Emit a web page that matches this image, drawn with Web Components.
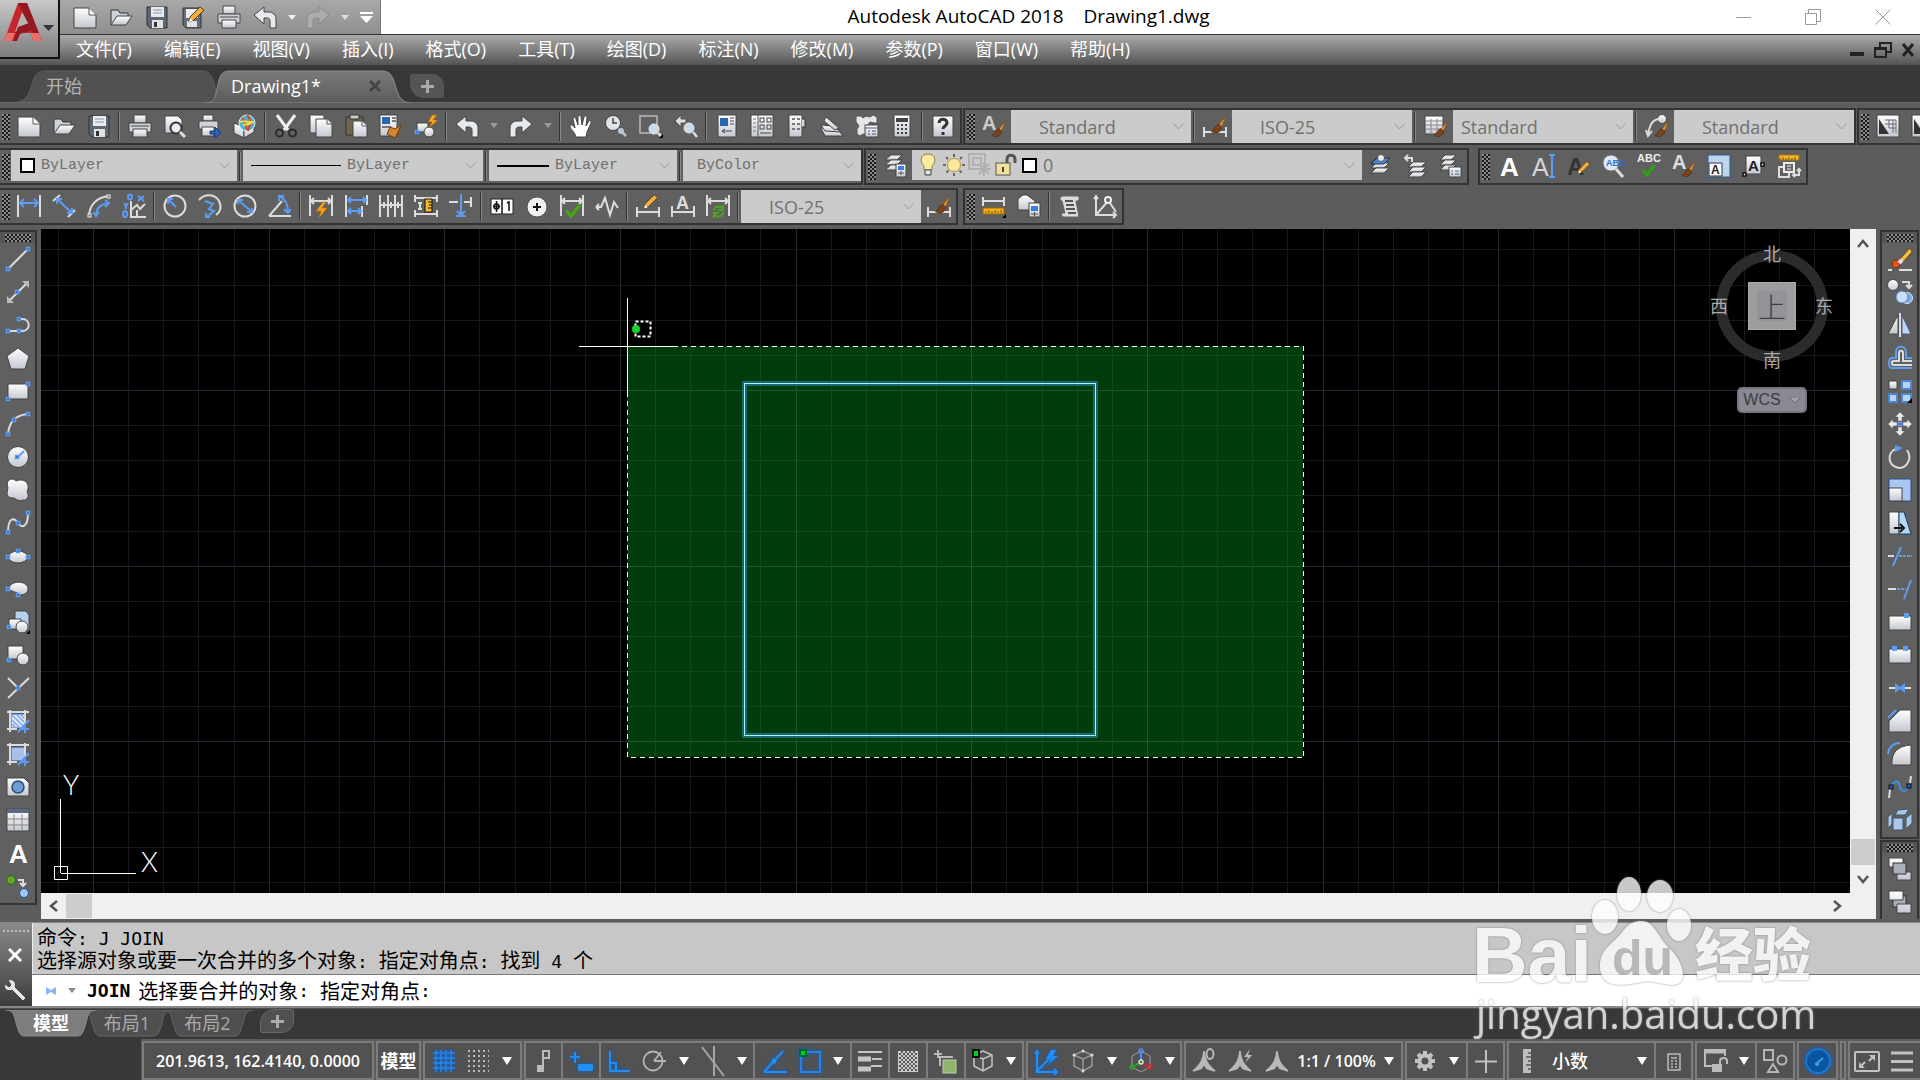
<!DOCTYPE html>
<html lang="zh-CN">
<head>
<meta charset="utf-8">
<title>Autodesk AutoCAD 2018 Drawing1.dwg</title>
<style>
html,body{height:100%}
body{margin:0;display:flex;flex-direction:column;overflow:hidden;background:#5c5c5c;font:18px/24px "Open Sans","Noto Sans CJK SC",sans-serif;color:#fff;position:relative}
.bars{display:flex;flex-direction:column;gap:3px;padding:5px 0 4px;background:#5c5c5c;border-top:1px solid #696969;box-sizing:border-box;height:127px;flex:none}
.row{display:flex;height:37px}
.row .gap{width:8px;flex:none}
.row .gap.s{width:4px}
.work{flex:1;min-height:0;display:flex}
.side{width:41px;flex:none;overflow:hidden}
.side.r{width:40px;margin-left:4px}
</style>
</head>
<body>
<cad-header></cad-header>
<cad-file-tabs></cad-file-tabs>
<section class="bars">
  <div class="row">
    <cad-toolbar><cad-tools list="new open save | print preview plot publish | cut copy paste match bedit | undo v redo v | pan zoomrt zoomwin zoomprev | props dcenter tpal sheet markup calc | help"></cad-tools></cad-toolbar>
    <cad-toolbar><cad-tools list="tstyle"></cad-tools><cad-combo label="文字样式" value="Standard" pad="28"></cad-combo><cad-tools list="| dstyle"></cad-tools><cad-combo label="标注样式" value="ISO-25" pad="28"></cad-combo><cad-tools list="| tbstyle"></cad-tools><cad-combo label="表格样式" value="Standard" pad="8"></cad-combo><cad-tools list="| mlstyle"></cad-tools><cad-combo label="多重引线样式" value="Standard" pad="28"></cad-combo></cad-toolbar>
    <cad-toolbar><cad-tools list="vp1 vp1"></cad-tools></cad-toolbar>
  </div>
  <div class="row">
    <cad-toolbar>
      <cad-combo class="mono" label="颜色" value="ByLayer" pad="4" w="226"><cad-swatch></cad-swatch></cad-combo><cad-tools list="|"></cad-tools>
      <cad-combo class="mono" label="线型" value="ByLayer" pad="6" w="240"><cad-line w="90" t="1"></cad-line></cad-combo><cad-tools list="|"></cad-tools>
      <cad-combo class="mono" label="线宽" value="ByLayer" pad="6" w="188"><cad-line w="52" t="2"></cad-line></cad-combo><cad-tools list="|"></cad-tools>
      <cad-combo class="mono" label="打印样式" value="ByColor" pad="14" w="178"></cad-combo>
    </cad-toolbar>
    <cad-toolbar><cad-tools list="layers"></cad-tools><cad-combo class="layer" label="图层" value="0" pad="4" w="450"><cad-icon name="bulb"></cad-icon><cad-icon name="sun"></cad-icon><cad-icon name="vpfreeze"></cad-icon><cad-icon name="lock"></cad-icon><cad-swatch></cad-swatch></cad-combo><cad-tools list="laycur layprev laystate"></cad-tools></cad-toolbar>
    <span class="gap"></span>
    <cad-toolbar><cad-tools list="mtext stext tedit tfind spell tstyle2 tscale tjust tspace"></cad-tools></cad-toolbar>
  </div>
  <div class="row">
    <cad-toolbar><cad-tools list="dlin dali darc dord | drad djog ddia dang | dquick dbase dcont dspace dbreak | tol cmark dinsp djogl | dedit dtedit dupd |"></cad-tools><cad-combo label="标注样式控制" value="ISO-25" pad="28"></cad-combo><cad-tools list="dstyle"></cad-tools></cad-toolbar>
    <span class="gap s"></span>
    <cad-toolbar><cad-tools list="dist massprop | list idpt"></cad-tools></cad-toolbar>
  </div>
</section>
<main class="work">
  <div class="side"><cad-toolbar vertical><cad-tools list="line xline pline polygon rect arc circle cloud spline ellipse earc insert block point hatch gradient region table mtext addsel"></cad-tools></cad-toolbar></div>
  <cad-canvas></cad-canvas>
  <div class="side r"><cad-toolbar vertical class="right"><cad-tools list="erase mcopy mirror offset array move rotate scale stretch trim extend brkpt brk join chamfer fillet blend explode"></cad-tools></cad-toolbar><cad-toolbar vertical class="right"><cad-tools list="front back"></cad-tools></cad-toolbar></div>
</main>
<cad-command></cad-command>
<cad-layout-tabs></cad-layout-tabs>
<cad-status></cad-status>
<cad-watermark></cad-watermark>

<script>
/* ---------- icon drawings, on a 24 x 24 grid ---------- */
const n=(x,y)=>`<rect class="n" x="${x-1.5}" y="${y-1.5}" width="3" height="3"/>`;
const A=(x,y,s,c='#ddd',w=700)=>`<text x="${x}" y="${y}" font-size="${s}" fill="${c}" font-weight="${w}">A</text>`;
const brush=`<path d="M23 2L14 13l3 3z" fill="#f09a28" stroke="#7a4a10" stroke-width=".7"/><path d="M15 12c-5 0-5 6-9 8 4 3 11 2 12-5z" fill="#7a431c" stroke="#4a2810" stroke-width=".7"/>`;
const sbrush=`<g transform="translate(5 5) scale(.82)">${brush}</g>`;
const pencil=`<path d="M8 17l1-5L19 2l4 3-10 10z" fill="#f3b03c" stroke="#5a3b12"/><path d="M8 17l1-4 3 3z" fill="#fff"/>`;
const layer3=`<path class="f" d="M8 4h13l-5 5H3z"/><path class="f" d="M8 9h13l-5 5H3z"/><path class="f" d="M8 14h13l-5 5H3z"/>`;
const dimH=(y=8)=>`<path class="s" d="M1 1v21M23 1v21M2 ${y}h20M5 ${y-3}l-3 3 3 3M19 ${y-3}l3 3-3 3" stroke-width="1.500"/>`;
const compass=(x)=>`<path d="M12 2c-1 9-3 13-11 20l8-2.500 3-4 3 4 8 2.500C15 15 13 11 12 2z" fill="#b8b8b8" stroke="#b8b8b8" stroke-width="1.500"/>${x}`;
const cube=(c='#b0b0b0')=>`<path d="M12 2l9 4v11l-9 5-9-5V6zM3 6l9 4 9-4M12 10v12" fill="none" stroke="${c}" stroke-width="1.5"/>`;
const page=`<path class="f" d="M1 3h15l7 7v13H1z"/><path d="M16 3v7h7" fill="#fff" stroke="#555"/>`;
const I={
new:page,
open:`<path d="M2 20V5h7l2 3h8v4" fill="#cdd2da" stroke="#333"/><path class="f" d="M2 20l6-9h15l-6 9z"/>`,
save:`<path d="M2 2h20v21H5l-3-3z" fill="#5d6673" stroke="#333"/><rect x="6" y="2" width="13" height="10" fill="#e9ebef"/><path d="M8 5h9M8 8h9" stroke="#8a96a8"/><rect x="7" y="15" width="11" height="8" fill="#dfe3e8"/><rect x="9" y="17" width="3" height="5" fill="#333"/>`,
saveas:`<path d="M2 3h18v20H5l-3-3z" fill="#666e7a" stroke="#333"/><rect x="5" y="4" width="12" height="9" fill="#e9ebef"/><rect x="6" y="16" width="10" height="6" fill="#dfe3e8"/>${pencil}`,
print:`<path class="f" d="M6 1h12v8H6z"/><path d="M1 9h22v9H1z" fill="#cfd3d9" stroke="#444"/><path class="f" d="M5 15h14v8H5z"/><path d="M3 12h18" stroke="#444"/>`,
preview:`<path class="f" d="M2 2h13l4 4v13H2z"/><circle cx="13" cy="14" r="5.5" fill="#e6eefa" stroke="#333" stroke-width="2"/><path d="M17 18l5 5" stroke="#ddd" stroke-width="3"/>`,
plot:`<path class="f" d="M5 1h10v6H5z"/><path d="M1 7h19v8H1z" fill="#cfd3d9" stroke="#444"/><path class="f" d="M4 13h12v9H4z"/><path d="M12 17h5v-4l6 6-6 5v-4h-5z" fill="#2b63b8" stroke="#183c78"/>`,
publish:`<path class="f" d="M1 9l10 4v11L1 19z"/><path class="f" d="M11 13l10-4v9l-10 6z"/><circle cx="14" cy="9" r="8" fill="#3fb6d8" stroke="#e8e8e8"/><path d="M9 4c4 3 2 7 6 12M14 1c5 5 3 10 1 16" stroke="#e8402e" fill="none" stroke-width="2"/><path d="M7 8c5-2 9 1 14 0M10 12c3-4 7 1 9-5" stroke="#f2e037" fill="none" stroke-width="2"/>`,
cut:`<path d="M3 1l11 15M21 1L10 16" stroke="#eee" stroke-width="3"/><circle cx="5.500" cy="19" r="3.500" fill="none" stroke="#2c2c2c" stroke-width="2"/><circle cx="18.500" cy="19" r="3.500" fill="none" stroke="#2c2c2c" stroke-width="2"/>`,
copy:`<path class="f" d="M1 1h14v18H1z"/><path class="f" d="M7 5h11l5 5v13H7z"/><path d="M18 5v5h5" fill="#fff" stroke="#555"/>`,
paste:`<path d="M2 3h17v18H2z" fill="#75644c" stroke="#333"/><path d="M6 1h9v4H6z" fill="#ccc" stroke="#333"/><path class="f" d="M9 7h9l5 5v11H9z"/><path d="M18 7v5h5" fill="#fff" stroke="#555"/>`,
match:`<rect class="f" x="1" y="1" width="17" height="21"/><rect x="3" y="3" width="8" height="7" fill="#2b66b5"/><path d="M13 4h4M13 7h4M3 13h9" stroke="#555" stroke-width="1.500"/><path d="M22 11l-6 4-5-2-3 7 8 4 3-6z" fill="#d9842c" stroke="#6e3b0e"/>`,
bedit:`<rect class="f" x="3" y="9" width="11" height="9"/><circle class="f" cx="15" cy="18" r="5"/>${n(3,18)}<path d="M18 1l-4 7h4l-3 6 9-8h-5l4-5z" fill="#f5a623" stroke="#a35d00" stroke-width=".6"/>`,
undo:`<path d="M1 10l10-8v5h5c4 0 7 3 7 7v9h-6v-7c0-2-1-3-3-3h-3v6z" fill="#e6e9ee" stroke="#444"/>`,
redo:`<path d="M23 10l-10-8v5H8c-4 0-7 3-7 7v9h6v-7c0-2 1-3 3-3h3v6z" fill="#e6e9ee" stroke="#444"/>`,
redod:`<path d="M23 10l-10-8v5H8c-4 0-7 3-7 7v9h6v-7c0-2 1-3 3-3h3v6z" fill="#adadad" stroke="#888"/>`,
pan:`<path d="M7 23C6 18 1 15 1 12c1-2 3-1 5 2L4 5c0-2 3-2 3 0l2 6V3c0-2 3-2 3 0l1 8 2-8c1-2 3-1 3 1l-1 8 3-5c1-1 3 0 2 2l-4 9-1 5z" fill="#fff" stroke="#444"/>`,
zoomrt:`<path d="M15 15l7 7" stroke="#bbb" stroke-width="3"/><circle cx="9" cy="9" r="7.500" fill="#dfe4ea" stroke="#444"/><path d="M9 4v5h4" stroke="#444" fill="none" stroke-width="1.500"/><circle cx="17" cy="17" r="3" fill="#b9c6d8"/>`,
zoomwin:`<rect x="1" y="2" width="17" height="17" fill="none" stroke="#bbb" stroke-width="1.500"/><circle cx="15" cy="15" r="5" fill="#c9dbe8" stroke="#e8e8e8"/><path d="M19 19l3 3" stroke="#ddd" stroke-width="2.500"/><path class="k" d="M24 20v4h-4z"/>`,
zoomprev:`<path d="M1 7l6-6v4h5v4H7v4z" fill="#ddd" stroke="#555"/><circle cx="15" cy="14" r="5" fill="#c9dbe8" stroke="#e8e8e8"/><path d="M19 18l4 5" stroke="#ddd" stroke-width="2.500"/>`,
props:`<rect class="f" x="3" y="1" width="18" height="22"/><rect x="5" y="4" width="8" height="8" fill="#2b66b5"/><path d="M15 4h4M15 7h4M15 10h4M7 17h10M7 17l3-2M7 17l3 2" stroke="#444"/>`,
dcenter:`<rect class="f" x="1" y="1" width="22" height="22"/><path d="M8 1v22" stroke="#555"/><path d="M3 5h3M3 9h3M3 13h3M3 17h3" stroke="#777"/><g fill="none" stroke="#444"><rect x="10" y="4" width="4" height="4"/><rect x="17" y="4" width="4" height="4"/><rect x="10" y="11" width="4" height="4"/><rect x="17" y="11" width="4" height="4"/></g><path d="M10 19h11" stroke="#444"/>`,
tpal:`<rect class="f" x="4" y="1" width="13" height="22"/><path d="M17 5h3v8h-3" fill="#ddd" stroke="#333"/><path d="M7 5h3M12 5h3M7 10h3M12 10h3M7 15h3M12 15h3" stroke="#777" stroke-width="2"/>`,
sheet:`<path class="f" d="M1 14h16l6 8H5z"/><path class="f" d="M1 11l12 1 8 6-16-1z"/><path class="f" d="M6 3l13 11-4 2L4 7z"/>`,
markup:`<path d="M1 2h5l2 2 3-2 4 1 3-2 4 2v6h-3l-4-1-3 4v9l-4-1-3 2-3-2V15l2-3-3-4z" fill="#e3e6eb" stroke="#555"/><rect class="f" x="10" y="11" width="13" height="12"/><path d="M10 14h13M13 17h2M17 17h4M13 20h2M17 20h4" stroke="#557"/>`,
calc:`<rect class="f" x="4" y="1" width="16" height="22"/><rect x="6" y="4" width="12" height="4" fill="#444"/><path d="M7 11h2M11 11h2M15 11h2M7 15h2M11 15h2M15 15h2M7 19h2M11 19h2M15 19h2" stroke="#444" stroke-width="2"/>`,
help:`<rect class="f" x="2" y="2" width="20" height="21"/><path d="M8 9c0-5 8-5 8 0 0 3-4 3-4 6M12 18v3" fill="none" stroke="#333" stroke-width="3"/>`,
tstyle:`${A(0,16,20,'#ccc')}${sbrush}`,
dstyle:`<path class="s" d="M1 13v10M23 13v10M2 18h20"/><g transform="translate(3 0) scale(.88)">${brush}</g>`,
tbstyle:`<rect class="f" x="1" y="2" width="18" height="18"/><path d="M1 7h18M1 11h18M1 15h18M7 5v15M13 5v15" stroke="#888"/>${sbrush}`,
mlstyle:`<circle class="f" cx="17" cy="5" r="4.500"/><path class="s" d="M14 5c-8 1-9 7-11 15M1 16l2 6 4-5"/>${sbrush}`,
vp1:`<rect class="f" x="1" y="1" width="22" height="22"/><path d="M3 5v15h10z" fill="#333"/><path d="M9 6h11v13M9 10h11M13 14h7M13 6v8M17 6v13" stroke="#667" fill="none"/>`,
layers:`<path class="f" d="M8 1h11l-5 5H2z"/><path class="f" d="M8 6h11l-5 5H2z"/><path class="f" d="M8 11h11l-5 5H2z"/><rect class="f" x="13" y="10" width="10" height="13"/><rect x="15" y="12" width="6" height="4" fill="#3b7de0"/><path d="M15 19h6M18 17v4" stroke="#555"/>`,
bulb:`<path d="M12 1c-9 0-8 9-4 12v4h8v-4c4-3 5-12-4-12z" fill="#fbe9a0" stroke="#8b7a4a"/><path class="f" d="M9 17h6v5H9z"/>`,
sun:`<path d="M12 1v22M1 12h22M4 4l16 16M20 4L4 20" stroke="#666" stroke-width="2" stroke-dasharray="3 16 3"/><circle cx="12" cy="12" r="6.500" fill="#fde79c" stroke="#b89a4a"/>`,
vpfreeze:`<g fill="none" stroke="#a8a8a8" stroke-width="1.500"><rect x="1" y="1" width="16" height="15"/><rect x="5" y="5" width="8" height="7"/><path d="M16 9v14M9 16h14M11 11l10 10M21 11L11 21" stroke="#b0b0b0" stroke-width="2"/></g>`,
lock:`<path d="M13 11V6c0-5 8-5 8 0v4" fill="none" stroke="#555" stroke-width="3"/><rect x="2" y="10" width="14" height="12" fill="#f3e39a" stroke="#555"/><path d="M9 14v5" stroke="#444" stroke-width="2"/>`,
laycur:`${layer3}<path d="M9 4h13l-6 6H3z" fill="#4a86d6" stroke="#234"/><circle cx="13" cy="4" r="3.500" fill="#eee" stroke="#555"/>`,
layprev:`<g transform="translate(2 4)">${layer3}</g><path class="s" d="M9 8V4H2M5 1L2 4l3 3" stroke-width="1.500"/>`,
laystate:`<path class="f" d="M7 1h11l-5 5H2z"/><path class="f" d="M7 6h11l-5 5H2z"/><path class="f" d="M7 11h11l-5 5H2z"/><rect class="f" x="11" y="13" width="12" height="10"/><path d="M13 17h2M17 17h4M13 20h2M17 20h4" stroke="#468"/>`,
mtext:A(3,22,26,'#fff'),
stext:A(0,22,25,'#d6d6d6',400)+`<path class="b" d="M20 2v20M17 1h6M17 23h6"/>`,
tedit:A(0,21,24,'#333')+`<g transform="translate(5 6) scale(.78)">${pencil}</g>`,
tfind:`<circle cx="9" cy="9" r="8" fill="#dfe8f2" stroke="#777"/><path d="M14 15l7 8" stroke="#ddd" stroke-width="3"/><text x="4" y="12" font-size="9" fill="#2b6fe0" font-weight="700">ABC</text>`,
spell:`<text x="0" y="8" font-size="11" fill="#eee" font-weight="700">ABC</text><path d="M6 16l4 5 8-10" fill="none" stroke="#2f9e1a" stroke-width="3.500"/>`,
tstyle2:`${A(0,15,20)}${sbrush}`,
tscale:`<rect x="1" y="1" width="22" height="22" fill="#bcd6f2" stroke="#2a5a96"/><path d="M2 9h13v13H2z" fill="#fff" stroke="#333"/>${A(4,20,12,'#222')}`,
tjust:`<rect class="f" x="4" y="2" width="15" height="18"/>${A(6,17,15,'#222')}<g fill="#fff" stroke="#111" stroke-width="1.500"><rect x="1" y="19" width="3" height="3"/><rect x="19" y="9" width="3" height="3"/></g>`,
tspace:`<path d="M2 1h20v5H2z" fill="#f4b92c" stroke="#a87312" /><path d="M3 4v2M6 3v3M9 4v2M12 3v3M15 4v2M18 3v3" stroke="#7a5000"/><rect x="2" y="13" width="10" height="10" fill="none" stroke="#ddd" stroke-width="2"/><rect x="7" y="9" width="10" height="9" fill="#666" stroke="#eee" stroke-width="2"/><path d="M10 12h4M10 15h4" stroke="#eee"/><path class="s" d="M16 21h6v-6M18 19l-2 2 2 2M20 17l2-2 2 2" stroke-width="1.500"/>`,
dlin:`<path class="s" d="M1 1v22M23 1v22"/><path class="b" d="M3 9h18M7 5L3 9l4 4M17 5l4 4-4 4"/>`,
dali:`<path class="s" d="M1 7l7-6M16 23l7-7"/><path class="b" d="M5 5l15 14M5 10V5h5M20 14v5h-5"/>`,
darc:`<path class="s" d="M2 23C2 11 10 3 22 2"/><path class="b" d="M9 22c0-8 4-12 13-13M6 18l3 4 3-4M18 6l4 3-4 4"/><g fill="#666" stroke="#eee"><rect x="1" y="20" width="3" height="3"/><rect x="20" y="1" width="3" height="3"/></g>`,
dord:`<path class="s" d="M9 7v16h15M9 16l6-5 3 4 5-5M15 23v-7" stroke-width="1.500"/><path class="b" d="M16 2l6 5M22 2l-6 5"/><path class="b" d="M2 9l2 3 2-3M4 12v3" stroke-width="1.500"/><ellipse class="b" cx="8" cy="3" rx="2" ry="2.500" stroke-width="1.500"/><ellipse class="b" cx="3" cy="20" rx="2" ry="3" stroke-width="1.500"/>`,
drad:`<circle class="s" cx="12" cy="12" r="10.500"/><path class="b" d="M13 13L5 5M5 10V5h5"/>`,
djog:`<path class="s" d="M1 6C7-1 17 0 21 7c3 6 1 11-3 14"/><path class="b" d="M7 7l8 3-4 5 5 2-7 6M12 23H8v-4"/>`,
ddia:`<circle class="s" cx="12" cy="12" r="10.500"/><path class="b" d="M5 6l14 12M5 10V6h5M19 14v4h-5"/>`,
dang:`<path class="s" d="M1 22h22M1 22L14 7"/><path class="b" d="M11 2c7 3 9 10 9 16M11 7V2h5M16 15l4 4 3-4"/>`,
dquick:dimH(7)+`<path d="M14 8l-7 9h5l-2 7 8-10h-5l4-6z" fill="#f7a11a" stroke="#b86a00" stroke-width=".6"/>`,
dbase:`<path class="s" d="M2 1v22M23 1v10M18 12v11" stroke-width="1.500"/><path class="b" d="M4 6h18M4 17h13M7 3L4 6l3 3M7 14l-3 3 3 3M19 3l3 3-3 3M14 14l3 3-3 3"/>`,
dcont:`<path class="s" d="M1 1v22M9 1v22M16 1v22M23 1v22M2 11h21M5 8v6M12 8v6M19 8v6" stroke-width="1.300"/>`,
dspace:`<path class="s" d="M1 1v7M23 1v7M1 4h22M1 16v7M23 16v7M1 20h22M6 8v8M4 9h4M4 15h4" stroke-width="1.500"/><rect x="11" y="5" width="7" height="13" fill="#f4b92c" stroke="#111"/><path d="M14 8h4M15 11h3M14 14h4" stroke="#111"/>`,
dbreak:`<path class="s" d="M0 8h9M15 8h7M22 3v10" /><path class="b" d="M12 0v21M7 22h10M8 17l4 4 4-4"/>`,
tol:`<rect x="1" y="5" width="22" height="15" fill="#fff" stroke="#222"/><path d="M12 5v15M6.500 7v11M3 12.500h7M17 9l2-1v9" stroke="#111" stroke-width="1.500" fill="none"/><circle cx="6.500" cy="12.500" r="2.500" fill="none" stroke="#111" stroke-width="1.500"/>`,
cmark:`<circle cx="12" cy="13" r="10" fill="#f1f1f1" stroke="#555"/><path d="M12 9v8M8 13h8" stroke="#111" stroke-width="2"/>`,
dinsp:dimH(7)+`<path d="M6 16l5 6L20 11" fill="none" stroke="#46a411" stroke-width="3.500"/>`,
djogl:`<path class="s" d="M1 13h5l4-9 5 17 4-13 4 6M1 13l3-3M1 13l3 3" stroke-width="1.500"/>`,
dedit:`<path class="s" d="M1 13v10M23 13v10M2 18h20" stroke-width="1.500"/><g transform="translate(1 -1) scale(.9)">${pencil}</g>`,
dtedit:A(5,15,18)+`<path class="s" d="M1 12v11M23 12v11M2 18h20" stroke-width="1.500"/>`,
dupd:dimH(7)+`<path d="M8 17c0-5 7-6 9-2M17 18c0 5-7 6-9 2M17 11v5h-5M8 24v-5h5" fill="none" stroke="#4aa520" stroke-width="2"/>`,
dist:`<path class="s" d="M1 3v9M22 3v9M2 7h19"/><path d="M1 14h21v6H1z" fill="#f4b01c" stroke="#9a6400"/><path d="M4 17v2M7 16v3M10 17v2M13 16v3M16 17v2M19 16v3" stroke="#7a5000"/><path class="k" d="M24 20v4h-4z"/>`,
massprop:`<path class="f" d="M1 5l5-4h4l8 6v9H1z"/><rect class="f" x="12" y="9" width="11" height="14"/><rect x="14" y="12" width="7" height="5" fill="#3b7de0"/><path d="M14 20h7M17.500 18v4" stroke="#555"/>`,
list:`<path d="M5 2h15c2 2 1 5-1 5h-1l3 16H6c-3 0-3-4-1-4h2L4 7C1 6 2 2 5 2z" fill="#d7dade" stroke="#666"/><path d="M7 7h8M8 11h8M8 15h9M10 19h8" stroke="#555" stroke-width="2"/>`,
idpt:`<path class="s" d="M3 2v19h20M3 21l12-14M15 6l8 12M1 5l2-3 2 3M20 18l3 3-3 3" stroke-width="1.500"/><circle cx="15" cy="6" r="3" fill="#666" stroke="#eee" stroke-width="2"/>`,
line:`<path class="s" d="M2 22L22 2"/>${n(2,22)}${n(22,2)}`,
xline:`<path class="s" d="M4 20L20 4" stroke="#bbb"/><path d="M16 1h7v7zM1 16v7h7z" fill="#bbb"/>${n(11,12)}`,
pline:`<path class="s" d="M2 18h14c9 0 9-12 0-12h-3"/>${n(2,18)}${n(13,18)}${n(13,6)}`,
polygon:`<path class="f" d="M12 2l11 8-4 13H5L1 10z"/>`,
rect:`<rect class="f" x="2" y="5" width="20" height="15"/>${n(2,20)}${n(22,5)}`,
arc:`<path class="s" d="M2 22C3 10 10 3 22 2"/>${n(2,22)}${n(8,8)}${n(22,2)}`,
circle:`<circle class="f" cx="12" cy="12" r="10.500"/><path class="b" d="M12 12l6-6" stroke-width="1.500"/>${n(11,12)}`,
cloud:`<path class="f" d="M2 3c3-3 6-2 8 0 4-2 9-1 11 2 2 4 1 6 0 9 3 4 0 9-4 8-4 2-7-1-9-2-5 0-7-2-7-5 1-3 0-3 1-5-1-3-1-5 0-7z"/>`,
spline:`<path class="s" d="M2 22C2 6 8 6 12 12s10 4 10-10" stroke-width="2.500"/>${n(2,21)}${n(12,12)}${n(22,2)}`,
ellipse:`<ellipse class="f" cx="12" cy="13" rx="9.500" ry="6"/>${n(2,13)}${n(22,13)}${n(12,7)}`,
earc:`<path class="f" d="M3 12c0-9 19-9 19 0 0 5-5 6-9 6-2-4-6-2-10-6z"/>${n(2,12)}${n(12,18)}`,
insert:`<path d="M9 1h11l3 4v15H9z" fill="#b7d1ef" stroke="#444"/><path class="f" d="M3 9h12v10H3z"/><circle class="f" cx="16" cy="17" r="6"/>${n(3,17)}<path class="k" d="M24 20v4h-4z"/>`,
block:`<rect class="f" x="2" y="3" width="15" height="13"/><circle class="f" cx="17" cy="16" r="6"/>${n(3,17)}`,
point:`<path class="s" d="M2 2l11 11M2 22L23 2" stroke-width="1.500"/>${n(12,12)}`,
hatch:`<rect x="5" y="5" width="14" height="14" fill="#dfeafa" stroke="#2a5aa8"/><path d="M5 5l14 14M10 5l9 9M5 10l9 9M14 5l5 5M5 14l5 5" stroke="#7fa9e6" stroke-width="1.500"/><path class="s" d="M1 3h22M4 1v22M19 1v14M1 20h10" stroke-width="1.500"/><path class="b" d="M12 23L23 11M14 20h9M19 17v7" stroke-width="1.500"/>`,
gradient:`<rect x="5" y="5" width="14" height="14" fill="#a9c0e8" stroke="#2a4a88"/><path class="s" d="M1 3h22M4 1v22M19 1v14M1 20h10" stroke-width="1.500"/><path class="b" d="M12 23L23 11M14 20h9M19 17v7" stroke-width="1.500"/>`,
region:`<path class="f" d="M1 3h17l5 5v13H1z"/><circle cx="12" cy="12" r="6" fill="#6d9bd2" stroke="#2c4c78" stroke-width="1.500"/>`,
table:`<rect class="f" x="1" y="1" width="22" height="22"/><path d="M1 3h22" stroke="#5a6a85" stroke-width="4"/><path d="M1 11h22M1 17h22M8 6v17M16 6v17" stroke="#8a8a8a"/>`,
addsel:`<circle cx="5" cy="6" r="4.500" fill="#5fa52d" stroke="#2d5a10"/><circle cx="18" cy="19" r="4.500" fill="#9cc6f2" stroke="#284e86"/><path class="s" d="M12 6h5v5M14 9l3 3 3-3" stroke-width="1.500" stroke="#aaa"/>`,
erase:`<path d="M22 1L11 13l3 3L24 5z" fill="#f4c044" stroke="#6b4a10"/><circle cx="8" cy="17" r="4" fill="#e0561a" stroke="#7c2a06"/><path d="M11 13l3 3" stroke="#dde" stroke-width="4"/><path class="s" d="M0 23h4M11 23h13"/>`,
mcopy:`<circle class="f" cx="5" cy="5" r="5.500"/><circle cx="19" cy="18" r="5.500" fill="#7fabe8" stroke="#dce8f8"/><circle cx="14" cy="17" r="6" fill="#c9def6" stroke="#5580ba"/><path class="s" d="M14 2h7v5M18 5l3 3 3-3" stroke-width="1.500"/>`,
mirror:`<path class="f" d="M10 2v19H0z"/><path d="M14 2v19h9z" fill="#bcd6f5" stroke="#557"/><path class="s" d="M12 0v24"/>`,
offset:`<path class="b" d="M24 12h-6V6c0-7-10-7-10 0v6H4c-4 0-4 10 0 10h20" stroke-width="1.800"/><path class="s" d="M24 19H6c-3 0-3-4 0-4h5V7c0-3 4-3 4 0v8h9" stroke-width="1.500"/>`,
array:`<rect class="f" x="1" y="2" width="8" height="8"/><g fill="#b6d3f8" stroke="#4d86d8" stroke-width="2"><rect x="14" y="2" width="9" height="8"/><rect x="1" y="15" width="8" height="8"/><rect x="14" y="15" width="9" height="8"/></g><path class="k" d="M24 19v5h-5z"/>`,
move:`<path d="M12 0l5 5h-3v4h-4V5H7zM12 24l5-5h-3v-4h-4v4H7zM0 12l5-5v3h4v4H5v3zM24 12l-5-5v3h-4v4h4v3z" fill="#e8e8e8" stroke="#555" stroke-width=".5"/>${n(12,12)}`,
rotate:`<path class="s" d="M7 4C-1 9 0 20 9 22.500S25 14 19 5"/><path class="bf" d="M7 0l8 3-8 4z"/>`,
scale:`<rect x="1" y="1" width="22" height="22" fill="#a9c8f0" stroke="#2a4a88"/><rect class="f" x="1" y="10" width="13" height="13"/>`,
stretch:`<path class="f" d="M1 1h10v22H1z"/><path d="M11 1h5l7 22H11z" fill="#b6d6f5" stroke="#1d3f6b"/><path d="M6 17h8M12 13l4 4-4 4" stroke="#111" stroke-width="2" fill="none"/>`,
trim:`<path class="s" d="M0 12h6"/><path class="b" d="M5 22L13 3"/><path class="b" d="M11 12h13" stroke-dasharray="3 1"/>`,
extend:`<path class="s" d="M0 12h8"/><path class="b" d="M16 22L23 3"/><path class="b" d="M9 12h9" stroke-dasharray="3 1"/>`,
brkpt:`<rect class="f" x="1" y="6" width="22" height="14"/><rect class="bf" x="16" y="3" width="5" height="5"/>`,
brk:`<rect class="f" x="1" y="6" width="22" height="14"/><rect class="bf" x="4" y="3" width="5" height="5"/><rect class="bf" x="15" y="3" width="5" height="5"/>`,
join:`<path class="s" d="M1 12h22" stroke-width="1.500"/><path class="bf" d="M7 7l5 4 5-4v10l-5-4-5 4z"/>`,
chamfer:`<path class="f" d="M12 1h11v22H1V12z"/><path class="b" d="M0 9L8 1"/>`,
fillet:`<path class="f" d="M4 23C3 10 10 4 23 3v20z"/><path class="b" d="M0 12C1 5 5 1 12 1" stroke-width="2.500"/>`,
blend:`<path d="M3 12C9 2 11 8 12 12s6 7 9-2" fill="none" stroke="#3f8fe0" stroke-width="2"/><path class="s" d="M1 23l1-9M22 8l1-7" stroke="#bbb"/><rect x="1" y="10" width="4" height="4" fill="#1b5cc0" stroke="#111"/><rect x="19" y="9" width="4" height="4" fill="#1b5cc0" stroke="#111"/>`,
explode:`<g fill="#a9c8ec" stroke="#456"><path d="M5 10h10v12H5zM10 2l11-1-4 6H7zM0 9l4-4v11l-4 4zM18 10l6-5v10l-6 6z"/></g>`,
front:`<path class="f" d="M1 1h14v9H1zM9 15h14v8H9z"/><rect x="5" y="6" width="13" height="11" fill="#a9b0ba" stroke="#333"/>`,
back:`<rect x="5" y="6" width="13" height="11" fill="#a9b0ba" stroke="#333"/><path class="f" d="M1 1h14v9H1zM9 14h14v9H9z"/>`,
/* status bar */
grid:`<path d="M4 1v22M9 1v22M14 1v22M19 1v22M1 4h22M1 9h22M1 14h22M1 19h22" stroke="#1f86f0" stroke-width="1.500"/>`,
dots:`<path d="M2 2h21M2 7h21M2 12h21M2 17h21M2 22h21" stroke="#bbb" stroke-width="2" stroke-dasharray="2 3"/>`,
infer:`<path d="M11 20V2h6v7h-6" fill="none" stroke="#bbb" stroke-width="2"/><rect x="5" y="16" width="7" height="7" fill="#bbb"/>`,
dyn:`<path d="M6 3v11M1 8h10" stroke="#1f8ff5" stroke-width="2"/><rect x="9" y="15" width="15" height="7" rx="1" fill="#1f8ff5"/>`,
ortho:`<path d="M3 2v20h20M3 14h6v8" fill="none" stroke="#1f8ff5" stroke-width="2"/>`,
polar:`<circle cx="11" cy="12" r="9.500" fill="none" stroke="#b5b5b5" stroke-width="1.800"/><path d="M12 12h12M12 12l7-9" fill="none" stroke="#b5b5b5" stroke-width="1.800"/>`,
iso:`<path d="M1-2l22 29M13-3v30" fill="none" stroke="#a5a5a5" stroke-width="2"/>`,
otrack:`<path d="M1 23h23M1 23L20 2" stroke="#1f8ff5" stroke-width="2" fill="none"/><circle cx="11" cy="12" r="2.500" fill="#1f8ff5"/>`,
osnap:`<rect x="3" y="3" width="19" height="20" fill="none" stroke="#1f86f0" stroke-width="2"/><rect x="2" y="1" width="6" height="6" fill="#00d21c" stroke="#063" stroke-width="2"/>`,
lwt:`<path d="M0 3h24M14 10h10M13 17h11" stroke="#c6c6c6" stroke-width="2"/><path d="M0 10h13M0 20h13" stroke="#c6c6c6" stroke-width="5"/>`,
transp:`<rect x="2" y="2" width="20" height="21" fill="#ccc"/><path d="M3 5h18M3 9h18M3 13h18M3 17h18M3 21h18" stroke="#555" stroke-width="2" stroke-dasharray="2 2"/><path d="M5 3h16M5 7h16M5 11h16M5 15h16M5 19h16" stroke="#666" stroke-width="2" stroke-dasharray="2 2"/>`,
cycle:`<path d="M4 1v8M0 5h8M6 17V8h13" stroke="#bbb" stroke-width="2" fill="none"/><rect x="9" y="11" width="13" height="13" fill="#8fb56b" stroke="#b8cfa2"/>`,
osnap3:cube('#c4c4c4')+`<rect x="2" y="1" width="6" height="7" fill="#00d21c" stroke="#111" stroke-width="2"/>`,
ducs:`<path d="M3 2v21h20M3 22L17 8M1 5l2-3 2 3M20 20l3 3-3 3" fill="none" stroke="#1f8ff5" stroke-width="2"/><path d="M17 1l-5 9h5l-3 6 10-9h-5l3-6z" fill="#1f8ff5"/>`,
self:cube('#999')+`<g fill="#ddd"><circle cx="12" cy="2" r="1.500"/><circle cx="3" cy="6" r="1.500"/><circle cx="21" cy="6" r="1.500"/><circle cx="12" cy="22" r="1.500"/></g>`,
gizmo:`<path d="M12 2l9 5v11l-9 5-9-5V7z" fill="none" stroke="#999"/><path d="M12 3v9" stroke="#4a8cff" stroke-width="2"/><path d="M12 13l8 5" stroke="#d22" stroke-width="2"/><path d="M12 13l-8 5" stroke="#2a2" stroke-width="2"/><g fill="none" stroke-width="1.500"><circle cx="12" cy="2" r="2" stroke="#4a8cff"/><circle cx="21" cy="18" r="2" stroke="#d22"/><circle cx="3" cy="18" r="2" stroke="#2a2"/><circle cx="12" cy="13" r="2" stroke="#ddd"/></g>`,
annovis:compass(`<ellipse cx="18" cy="5" rx="3.500" ry="5" fill="#525252" stroke="#bbb" stroke-width="2"/>`),
annoauto:compass(`<path d="M22 0l-6 8h4l-3 6 7-8h-4z" fill="#bbb"/>`),
anno:compass(''),
gear:`<path d="M12 2v20M2 12h20M5 5l14 14M19 5L5 19" stroke="#c2c2c2" stroke-width="4"/><circle cx="12" cy="12" r="5.500" fill="#535353" stroke="#c2c2c2" stroke-width="4"/>`,
plus:`<path d="M12 1v23M1 12.500h22" stroke="#c2c2c2" stroke-width="2"/>`,
ruler:`<path d="M8 0h8v24H8z" fill="#bdbdbd"/><path d="M16 4h-3M16 8h-5M16 12h-3M16 16h-5M16 20h-3" stroke="#555" stroke-width="1.500"/>`,
qprop:`<rect x="6" y="5" width="12" height="16" fill="none" stroke="#bbb" stroke-width="1.500"/><path d="M9 9h6M9 12h2M13 12h2M9 15h2M13 15h2M9 18h2M13 18h2" stroke="#bbb" stroke-width="1.500"/>`,
lockui:`<path d="M10 17H2V1h20v6" fill="none" stroke="#bbb" stroke-width="2"/><path d="M2 3h20" stroke="#bbb" stroke-width="3"/><path d="M17 16v-4c0-4 7-4 7 0v3" fill="none" stroke="#bbb" stroke-width="2"/><rect x="9" y="15" width="10" height="8" fill="#bbb"/>`,
isol:`<g fill="none" stroke="#b5b5b5" stroke-width="2"><rect x="1" y="1" width="9" height="10"/><circle cx="19" cy="11" r="4.500"/><path d="M10 15l5 8H5z"/></g>`,
gfx:`<circle cx="12" cy="12" r="12" fill="#0b559f" stroke="#1577d6" stroke-width="2"/><path d="M10 15l7-6" stroke="#3f9df0" stroke-width="2"/><circle cx="11" cy="15" r="2" fill="#3f9df0"/>`,
full:`<rect x="0" y="3" width="24" height="19" rx="1" fill="none" stroke="#c2c2c2" stroke-width="2"/><path d="M14 6h6v6zM4 13v6h6z" fill="#c2c2c2"/><path d="M14 12l4-4M6 17l4-4" stroke="#c2c2c2" stroke-width="2"/>`,
menu:`<path d="M1 4h22M1 12.500h22M1 21h22" stroke="#c2c2c2" stroke-width="3"/>`,
wrench:`<path d="M5 2c5-2 9 3 7 7l11 11-3 3L9 12c-4 2-9-1-7-6l4 3 2-2z" fill="#e4e7ec" stroke="#444"/>`
};
const make=(tag,fn)=>customElements.define(tag,class extends HTMLElement{
  connectedCallback(){ if(this.shadowRoot) return; const t=document.createElement('template'); t.innerHTML=fn(this);
    this.attachShadow({mode:'open'}).append(t.content.cloneNode(true)); }
});
const reset=`*{box-sizing:border-box}button{all:unset;box-sizing:border-box;display:flex;align-items:center;justify-content:center;flex:none}`;

make('cad-icon',e=>`<style>:host{display:block;width:24px;height:24px;flex:none}svg{display:block;overflow:visible}
.s{fill:none;stroke:#dcdcdc;stroke-width:2}.b{fill:none;stroke:#5c9cf5;stroke-width:2}.bf{fill:#5c9cf5}.f{fill:url(#g);stroke:#444;stroke-width:1}.k{fill:#000}.n{fill:#33599c;stroke:#5c9cf5;stroke-width:1.5}text{font-family:"Liberation Sans",sans-serif}</style>
<svg width="24" height="24" viewBox="0 0 24 24" aria-hidden="true"><defs><linearGradient id="g" x2="0" y2="1"><stop stop-color="#fff"/><stop offset="1" stop-color="#c3c7d0"/></linearGradient></defs>${I[e.getAttribute('name')]||''}</svg>`);

make('cad-tools',e=>`<style>${reset}:host{display:contents}button{width:35px;height:33px;padding-bottom:2px}button.v{width:19px}
i{width:6px;height:33px;flex:none;display:block;background:linear-gradient(#333,#333) 2px 2px/1px 29px no-repeat,linear-gradient(#888,#888) 3px 2px/1px 29px no-repeat}</style>`+
e.getAttribute('list').split(' ').map(k=>k=='|'?'<i></i>':k=='v'?`<button class="v" aria-label="更多"><svg width="8" height="5"><path d="M0 0h8L4 5z" fill="#999"/></svg></button>`:`<button aria-label="${k}"><cad-icon name="${k}"></cad-icon></button>`).join(''));

make('cad-toolbar',e=>{const v=e.hasAttribute('vertical');return `<style>*{box-sizing:border-box}:host{box-sizing:border-box;flex:none;display:flex;flex-direction:${v?'column':'row'};border:2px solid #333;background:#606060;${v?'width:37px;border-left-width:0;align-items:center;':'height:37px;'}margin-right:${v?0:1}px;margin-top:${v?1:0}px}
:host(:first-child){${v?'':'border-left-width:0'}}:host(.right){border-left-width:2px;width:39px}
.grip{flex:none;${v?'width:100%;height:11px;background:#555':'width:11px;height:100%'};display:flex;align-items:center;justify-content:center}
.grip b{${v?'width:26px;height:8px':'width:8px;height:26px'};background:repeating-conic-gradient(#1a1a1a 0 25%,#8a8a8a 0 50%) 0 0/4px 4px}</style><div class="grip"><b></b></div><slot></slot>`});

make('cad-swatch',e=>`<style>:host{display:block;width:15px;height:15px;border:2px solid #000;background:#fff;box-sizing:border-box;flex:none}</style>`);
make('cad-line',e=>`<style>:host{display:block;width:${e.getAttribute('w')}px;height:${e.getAttribute('t')}px;background:#000;flex:none}</style>`);
make('cad-combo',e=>`<style>:host{display:flex;align-items:center;width:${e.getAttribute('w')||180}px;height:33px;background:#cbcbcb;flex:none;box-sizing:border-box;font:18px/24px "Open Sans",sans-serif}
:host(.mono){font:15px/20px "Liberation Mono",monospace;height:31px}:host(.layer){height:30px;padding-left:4px}
::slotted(cad-swatch){margin:0 2px 0 9px}:host(.layer) ::slotted(cad-swatch){margin-left:2px}::slotted(cad-line){margin-left:8px}::slotted(cad-icon){margin-right:2px}
select{appearance:none;border:0;background:none;font:inherit;color:#707070;flex:1;min-width:0;height:100%;padding:0 0 0 ${e.getAttribute('pad')}px;margin:0;outline:0;border-radius:0}
svg{margin:0 7px;flex:none}</style><slot></slot><select aria-label="${e.getAttribute('label')}"><option>${e.getAttribute('value')}</option></select><svg width="11" height="7"><path d="M.5.5l5 5.500 5-5.500" fill="none" stroke="#9a9a9a"/></svg>`);

make('cad-header',e=>`<style>${reset}:host{display:block;height:65px;flex:none;position:relative}
.title{height:34px;display:flex;background:#fff;color:#000}
.quick{width:381px;padding-left:67px;background:linear-gradient(#a8a8a8,#8f8f8f);display:flex;align-items:center;flex:none;border-right:1px solid #777}
.quick button{width:36px;height:32px}.quick .v{width:17px}.quick .c{width:26px}
h1{flex:1;margin:0;padding-right:32px;text-align:center;font:19px/33px "Open Sans",sans-serif;font-weight:400;white-space:pre}
.win{display:flex;margin-right:2px}.win button{width:70px;height:34px}
nav{height:31px;display:flex;align-items:center;gap:32px;padding-left:76px;background:linear-gradient(#aaa,#545454);border-top:1px solid #333;font:18px/29px "Open Sans","Noto Sans CJK SC",sans-serif}
nav button{height:30px;white-space:nowrap;padding-bottom:1px}.mdi{margin-left:auto;display:flex;gap:9px;padding-right:5px}
.app{position:absolute;left:0;top:0;width:60px;height:59px;background:linear-gradient(#c9c9c9,#7d7d7d);border-right:2px solid #111;border-bottom:2px solid #111}</style>
<div class="title"><div class="quick">${['new','open','save','saveas','print','undo'].map(k=>`<button aria-label="${k}"><cad-icon name="${k}"></cad-icon></button>`).join('')}
<button class="v" aria-label="放弃列表"><svg width="8" height="5"><path d="M0 0h8L4 5z" fill="#eee"/></svg></button><button aria-label="重做"><cad-icon name="redod"></cad-icon></button><button class="v" aria-label="重做列表"><svg width="8" height="5"><path d="M0 0h8L4 5z" fill="#ddd"/></svg></button><button class="c" aria-label="自定义"><svg width="13" height="11"><path d="M0 1h13" stroke="#fff" stroke-width="2"/><path d="M0 4h13l-6.500 7z" fill="#fff"/></svg></button></div>
<h1>Autodesk AutoCAD 2018    Drawing1.dwg</h1>
<div class="win"><button aria-label="最小化"><svg width="15" height="15"><path d="M0 7.500h15" stroke="#999"/></svg></button><button aria-label="还原"><svg width="16" height="16" fill="none" stroke="#999"><path d="M.5 4.500h11v11H.5zM3.500 4V.5h12v12H12"/></svg></button><button aria-label="关闭"><svg width="16" height="16"><path d="M.5.5l15 15M15.500.5l-15 15" stroke="#999"/></svg></button></div></div>
<nav>${['文件(F)','编辑(E)','视图(V)','插入(I)','格式(O)','工具(T)','绘图(D)','标注(N)','修改(M)','参数(P)','窗口(W)','帮助(H)'].map(t=>`<button>${t}</button>`).join('')}
<div class="mdi"><button aria-label="最小化图形"><svg width="16" height="16"><path d="M1 12h14" stroke="#222" stroke-width="4"/></svg></button><button aria-label="还原图形"><svg width="18" height="16" fill="none" stroke="#222" stroke-width="2"><path d="M1 6h11v9H1zM6 5V1h11v9h-4M1 7h11"/></svg></button><button aria-label="关闭图形"><svg width="14" height="14"><path d="M2 1l10 12M12 1L2 13" stroke="#222" stroke-width="3"/></svg></button></div></nav>
<button class="app" aria-label="应用程序菜单"><svg width="56" height="56" viewBox="0 0 56 56"><path d="M3 40L17 2h9l15 38h-9l-2-8H17l-5 8z" fill="#c8242b"/><path d="M21 11l-7 20 16-5z" fill="#b3b3b3"/><path d="M12 40l5-14 14-5 3 7-15 5-3 7zM17 2h9l15 38h-5z" fill="#931820"/><path d="M3 40l3-8h8l-3 8zM32 40l-2-8h8l3 8z" fill="#e8706c"/><path d="M42 24h11l-5.500 6z" fill="#2f3640"/></svg></button>`);

make('cad-file-tabs',e=>`<style>${reset}:host{box-sizing:border-box;display:flex;height:37px;flex:none;background:#383838;padding-left:10px;align-items:flex-end;font:18px/30px "Open Sans","Noto Sans CJK SC",sans-serif}
.tab{display:grid;height:33px;width:211px;margin-right:-18px;color:#b4b4b4}.tab>*{grid-area:1/1}.tab svg.bg{width:100%;height:33px}.tab span{padding-left:36px;line-height:34px;display:flex;align-items:center;justify-content:space-between;padding-right:35px}
.on{width:208px;color:#fff;z-index:1}.on span{padding-left:28px;padding-right:30px}.plus{width:34px;height:24px;background:#555;border-radius:2px 12px 2px 14px;margin:0 0 4px 17px;z-index:2}</style>
<button class="tab"><svg class="bg" viewBox="0 0 211 33" preserveAspectRatio="none"><path d="M0 33c16 0 19-8 23-22C26 2 30 1 36 1h155c8 0 10 3 13 12l5 20z" fill="#515151" stroke="#5e5e5e"/></svg><span>开始</span></button>
<button class="tab on"><svg class="bg" viewBox="0 0 211 33" preserveAspectRatio="none"><defs><linearGradient id="t" x2="0" y2="1"><stop stop-color="#7a7a7a"/><stop offset="1" stop-color="#5c5c5c"/></linearGradient></defs><path d="M2 33c12 0 10-8 14-22C18 2 22 1 28 1h152c8 0 11 2 14 11 4 13 6 21 17 21z" fill="url(#t)" stroke="#8a8a8a"/></svg><span>Drawing1*<svg width="12" height="12"><path d="M1 1l10 10M11 1L1 11" stroke="#454545" stroke-width="3"/></svg></span></button>
<button class="plus" aria-label="新图形"><svg width="13" height="13"><path d="M6.500 0v13M0 6.500h13" stroke="#aaa" stroke-width="3"/></svg></button>`);

make('cad-canvas',e=>{
  let g='',h='';
  const add=(d,major)=>{g+=`<path d="${d}" stroke="${major?'#262635':'#17171d'}"/>`;h+=`<path d="${d}" stroke="${major?'#1b5a30':'#0d4a1d'}"/>`;};
  for(let k=-1;k<80;k++) add(`M${Math.round(52+35.13*k)+.5} 0v2400`,k%5==0);
  for(let k=-4;k<60;k++) add(`M0 ${Math.round(161+35.13*k)+.5}h4000`,k%5==0);
  return `<style>${reset}:host{flex:1;min-width:0;display:grid;grid-template:1fr 26px/1fr 26px;background:#f0f0f0}
.view{position:relative;overflow:hidden;background:#000}.view>svg{position:absolute;left:0;top:0}
.view>.ucs{top:auto;bottom:0}.nav{position:absolute;right:21px;top:14px;width:116px;height:180px}
.nav span{position:absolute;font:18px/20px "Noto Sans CJK SC",sans-serif;color:#aaa;width:20px;text-align:center}
.n{left:49px;top:0}.w{left:-4px;top:52px}.e{left:101px;top:52px}.s{left:49px;top:106px}
.cube{position:absolute;left:35px;top:39px;width:48px;height:48px;background:linear-gradient(#93949a,#93949a) center/30px 30px no-repeat #9d9d9d;border:1px solid #aaa;color:#3c3f45;font:28px/40px "Noto Sans CJK SC",sans-serif;font-weight:300;display:block;text-align:center}
.wcs{position:absolute;left:24px;top:144px;width:70px;height:26px;border-radius:5px;background:#8a8a93;border:2px solid #75757d;color:#3d3d42;font:16px/20px "Liberation Sans",sans-serif;gap:8px}
.v,.h{display:flex;background:#f0f0f0;align-items:center}.v{flex-direction:column}.v button{width:26px;height:28px}.h button{width:25px;height:26px}
.th{background:#cdcdcd;width:24px;height:24px;flex:none}.v .th{width:24px;height:26px;margin-top:auto}.h .th{width:26px}.h button:last-child{margin-left:auto}</style>
<div class="view"><svg width="100%" height="100%"><defs><clipPath id="c"><rect x="587" y="118" width="675" height="410"/></clipPath></defs>${g}
<g shape-rendering="crispEdges"><rect x="586" y="117" width="676" height="411" fill="#003c0c"/><g clip-path="url(#c)">${h}</g>
<rect x="586.500" y="117.500" width="676" height="411" fill="none" stroke="#fff" stroke-dasharray="5 4"/>
<rect x="703.500" y="154.500" width="351" height="352" fill="none" stroke="#14686e" stroke-width="5"/><rect x="703.500" y="154.500" width="351" height="352" fill="none" stroke="#a8f4ee"/>
<path d="M538 117.500h97M586.500 69v97" stroke="#fff"/></g>
<rect x="594.500" y="92.500" width="15" height="15" fill="none" stroke="#fff" stroke-width="2" stroke-dasharray="3 2"/><circle cx="595" cy="100" r="4" fill="#18d42a"/></svg>
<svg class="ucs" width="140" height="130" fill="none" stroke="#fff"><path d="M19.500 110V36M20 110.500h75M13.500 103.500h13v13h-13z"/><g fill="#fff" stroke="none" font-family="Lato,sans-serif" font-weight="300" font-size="27"><text x="22" y="32">Y</text><text x="100" y="109">X</text></g></svg>
<div class="nav"><svg width="116" height="130"><circle cx="59" cy="63" r="50.500" fill="none" stroke="#2b2b2b" stroke-width="11"/></svg><span class="n">北</span><span class="w">西</span><span class="e">东</span><span class="s">南</span><button class="cube">上</button><button class="wcs">WCS<svg width="12" height="7"><path d="M0 0h12L6 6z" fill="#a2a2b0" stroke="#666"/></svg></button></div></div>
<div class="v"><button aria-label="上"><svg width="12" height="9"><path d="M1 8l5-6 5 6" fill="none" stroke="#555" stroke-width="2.500"/></svg></button><div class="th"></div><button aria-label="下"><svg width="12" height="9"><path d="M1 1l5 6 5-6" fill="none" stroke="#555" stroke-width="2.500"/></svg></button></div>
<div class="h"><button aria-label="左"><svg width="9" height="12"><path d="M8 1L2 6l6 5" fill="none" stroke="#555" stroke-width="2.500"/></svg></button><div class="th"></div><button aria-label="右"><svg width="9" height="12"><path d="M1 1l6 5-6 5" fill="none" stroke="#555" stroke-width="2.500"/></svg></button></div><div></div>`});

make('cad-command',e=>`<style>${reset}:host{box-sizing:border-box;display:grid;grid-template-columns:32px 1fr;height:86px;margin-top:3px;flex:none;color:#000;font:20px/23px "Noto Sans CJK SC",sans-serif;border-top:1px solid #888;border-bottom:2px solid #888}
.l{font:18px/23px "DejaVu Sans Mono",monospace}.bar{background:linear-gradient(#8a8a8a,#3c3c3c);display:flex;flex-direction:column;align-items:center}
.bar i{width:26px;height:2px;margin:7px 0 11px;background:repeating-linear-gradient(90deg,#bbb 0 2px,transparent 2px 4px)}.bar button{width:30px;height:24px;margin-right:2px}.bar button+button{margin-top:11px}
.hist{height:51px;background:#c7c7c7;border-left:1px solid #eee;padding:2px 4px;white-space:pre}.hist div{height:23px}
.in{height:32px;background:#fff;border-top:1px solid #777;display:flex;align-items:center;white-space:pre;padding-left:12px}.in b{font-weight:700;margin:0 8px 0 11px}
.in svg+svg{margin-left:10px}input{border:0;outline:0;flex:1;min-width:0;height:28px;background:none;font:inherit;padding:0 4px}label{display:flex;align-items:center;white-space:pre}</style>
<div class="bar"><i></i><button aria-label="关闭"><svg width="14" height="14"><path d="M1 1l12 12M13 1L1 13" stroke="#fff" stroke-width="3"/></svg></button><button aria-label="自定义"><cad-icon name="wrench"></cad-icon></button></div>
<div><div class="hist"><div>命令<span class="l">: J JOIN</span></div><div>选择源对象或要一次合并的多个对象<span class="l">: </span>指定对角点<span class="l">: </span>找到<span class="l"> 4 </span>个</div></div>
<div class="in"><svg width="14" height="12"><path d="M2 2l5 3 5-3v8L7 7l-5 3z" fill="#8ab4f2"/></svg><svg width="8" height="5"><path d="M0 0h8L4 5z" fill="#888"/></svg><label for="c"><b class="l">JOIN</b><span>选择要合并的对象</span><span class="l">: </span><span>指定对角点</span><span class="l">:</span></label><input id="c"></div></div>`);

make('cad-layout-tabs',e=>{const tab=(t,w,on,i)=>`<button class="${on?'on':''}" style="width:${w}px;z-index:${3-i}"><svg viewBox="0 0 90 27" preserveAspectRatio="none"><path d="M0 0c10 0 8 10 12 19 2 6 3 7 8 7h50c5 0 6-1 8-7C82 10 80 0 90 0z" fill="${on?'#7d7d7d':'#4f4f4f'}" stroke="${on?'#8c8c8c':'#666'}"/></svg><span>${t}</span></button>`;
return `<style>${reset}:host{box-sizing:border-box;display:flex;height:31px;flex:none;background:#383838;padding-left:6px;font:18px/28px "Open Sans","Noto Sans CJK SC",sans-serif;color:#aaa;border-top:1px solid #505050}
button:not(.p){display:grid;height:27px;margin-right:-14px}button>*{grid-area:1/1}button svg{width:100%;height:27px}span{text-align:center}.on{color:#fff;font-weight:700}
.p{width:34px;height:24px;background:#505050;border:1px solid #666;border-radius:14px 2px 12px 2px;margin-left:17px}.p svg{width:13px;height:13px}</style>${tab('模型',90,1,0)}${tab('布局1',90,0,1)}${tab('布局2',99,0,2)}<button class="p" aria-label="新建布局"><svg width="13" height="13"><path d="M6.500 0v13M0 6.500h13" stroke="#aaa" stroke-width="3"/></svg></button>`});

make('cad-cell',e=>`<style>${reset}:host{display:flex;align-items:center;height:39px;width:${e.getAttribute('w')}px;flex:none;box-sizing:border-box;border-left:2px solid #7c7c7c}:host([plain]){border-left:0}
button{width:100%;height:100%;color:#fff;font:inherit;white-space:nowrap}:host([glow]) cad-icon{filter:drop-shadow(0 0 2px #0a5fd0)}svg{display:block}</style><button aria-label="${e.getAttribute('i')||''}">${e.getAttribute('i')=='v'?'<svg width="10" height="8"><path d="M0 0h10L5 8z" fill="#fff"/></svg>':`<cad-icon name="${e.getAttribute('i')}"></cad-icon>`}</button>`);
const cell=(i,w,o='')=>`<cad-cell i="${i}" w="${w}" ${o}></cad-cell>`;
make('cad-status',e=>`<style>${reset}:host{display:flex;justify-content:flex-end;height:41px;flex:none;background:#383838;font:16px/37px "Open Sans","Noto Sans CJK SC",sans-serif;font-weight:600}
.all{display:flex;gap:2px;background:#5c5c5c;padding-top:2px;padding-left:1px}
.g{display:flex;height:39px;background:#525252;border:2px solid #7c7c7c;border-left:0;flex:none}.g>cad-cell{margin-top:-2px}
.t{border-left:2px solid #7c7c7c;height:36px;white-space:nowrap;text-align:center;color:#fff}button.t{display:block;overflow:visible}.np{border-left:0}
.co{width:230px}.m{width:43px;font-size:18px}.sc{width:81px}.u{width:50px;font-size:18px;font-weight:500}.sp{width:34px}.thin{width:4px;border-left:2px solid #7c7c7c}.last{border-right:0}</style>
<div class="all"><div class="g"><div class="t co">201.9613, 162.4140, 0.0000</div></div>
<div class="g"><button class="t m">模型</button></div>
<div class="g">${cell('grid',39,'glow')}${cell('dots',31,'plain')}${cell('v',27,'plain')}</div>
<div class="g">${cell('infer',37)}${cell('dyn',38,'glow')}${cell('ortho',38,'glow')}${cell('polar',34,'plain')}${cell('v',25,'plain')}${cell('iso',34,'plain')}${cell('v',23,'plain')}${cell('otrack',41,'glow')}${cell('osnap',31,'plain glow')}${cell('v',25,'plain')}${cell('lwt',38)}${cell('transp',38)}${cell('cycle',38)}${cell('osnap3',36)}${cell('v',22,'plain')}</div>
<div class="g">${cell('ducs',38,'glow')}${cell('self',37,'plain')}${cell('v',22,'plain')}${cell('gizmo',36,'plain')}${cell('v',21,'plain')}</div>
<div class="g">${cell('annovis',38)}${cell('annoauto',36,'plain')}${cell('anno',38,'plain')}<button class="t np sc">1:1 / 100%</button>${cell('v',24,'plain')}</div>
<div class="g">${cell('gear',37)}${cell('v',24,'plain')}${cell('plus',37)}</div>
<div class="g">${cell('ruler',38)}<button class="t np u">小数</button><span class="sp"></span>${cell('v',25,'plain')}${cell('qprop',37)}</div>
<div class="g">${cell('lockui',38)}${cell('v',22,'plain')}${cell('isol',38)}</div>
<div class="g">${cell('gfx',39,'glow')}</div>
<div class="g"><span class="thin"></span></div>
<div class="g last">${cell('full',36)}${cell('menu',36,'plain')}</div></div>`);

make('cad-watermark',e=>`<style>:host{position:absolute;right:98px;bottom:30px;width:352px;height:176px;pointer-events:none;z-index:5}svg{display:block;overflow:visible;filter:drop-shadow(0 0 1px #777)}</style>
<svg width="352" height="176" opacity=".78" fill="#fff"><g transform="translate(-1470 -874)"><ellipse cx="1605" cy="917" rx="13" ry="17"/><ellipse cx="1629" cy="894" rx="12" ry="17"/><ellipse cx="1660" cy="896" rx="13" ry="16"/><ellipse cx="1679" cy="925" rx="12" ry="16"/><path d="M1642 921c12 0 16 16 27 27 14 12 22 38 2 37-10-1-18-5-29-3-12 2-40 10-42-14-1-20 14-24 23-37 6-8 12-10 19-10z"/>
<g font-family="Liberation Sans,sans-serif" font-weight="700"><text x="1472" y="982" font-size="77">Bai</text><text x="1612" y="975" font-size="50" fill="#b4b4b4">du</text></g><text x="1695" y="976" font-size="58" font-weight="900" font-family="Noto Sans CJK SC,sans-serif">经验</text><text x="1476" y="1029" font-size="40" font-family="Open Sans,sans-serif">jingyan.baidu.com</text></g></svg>`);
</script>
</body>
</html>
